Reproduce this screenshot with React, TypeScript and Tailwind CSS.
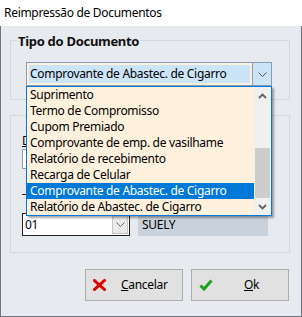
import React from 'react';

const items = [
  'Suprimento',
  'Termo de Compromisso',
  'Cupom Premiado',
  'Comprovante de emp. de vasilhame',
  'Relatório de recebimento',
  'Recarga de Celular',
  'Comprovante de Abastec. de Cigarro',
  'Relatório de Abastec. de Cigarro',
];
const selected = 6;

const Chevron = ({ className = '' }: { className?: string }) => (
  <svg width="9" height="5" viewBox="0 0 9 5" className={className}>
    <polyline points="0.5,0.5 4.5,4.5 8.5,0.5" fill="none" stroke="currentColor" strokeWidth="1" />
  </svg>
);

const ScrollArrow = ({ up }: { up?: boolean }) => (
  <svg width="9" height="6" viewBox="0 0 9 6">
    <polyline
      points={up ? '1,5 4.5,1.5 8,5' : '1,1 4.5,4.5 8,1'}
      fill="none"
      stroke="#606060"
      strokeWidth="1.8"
    />
  </svg>
);

export default function App() {
  return (
    <div
      className="relative flex h-[317px] w-[302px] flex-col bg-[#e7eaef] text-[12px] tracking-[-0.3px] text-black"
      style={{ fontFamily: '"Noto Sans", "DejaVu Sans", sans-serif' }}
    >
      {/* Title bar */}
      <div className="flex h-[26px] items-center bg-white pl-[4px] leading-none">
        Reimpressão de Documentos
      </div>

      <div className="flex flex-1 flex-col border-x border-b border-[#6f7480] px-[9px]">
        {/* Group 1 */}
        <div className="relative mt-[14px] h-[60px] w-[280px] border border-[#d4d7dc]">
          <span className="absolute left-[6px] top-[-7px] bg-[#e7eaef] px-[1px] text-[13px] font-bold leading-[14px] text-[#111]">
            Tipo do Documento
          </span>
          <div className="ml-[15px] mt-[21px] flex h-[24px] w-[246px] border border-[#8a9bb3] bg-[#fdf0dc]">
            <div className="m-[2px] flex flex-1 items-center bg-[#cce4f7] pl-[1px] leading-none">
              Comprovante de Abastec. de Cigarro
            </div>
            <div className="flex w-[19px] items-center justify-center border-l border-[#8a9bb3] bg-[#cce4f7] text-[#555]">
              <Chevron />
            </div>
          </div>
        </div>

        {/* Group 2 */}
        <div className="mt-[15px] flex h-[138px] w-[280px] flex-col items-start border border-[#d4d7dc] pl-[11px]">
          <span className="mt-[19px] text-[12px] leading-[12px] underline">D</span>
          <div className="mt-[2px] h-[20px] w-[110px] border border-[#9aa0a8] bg-white" />
          <span className="mt-[25px] h-[1px] w-[5px] bg-[#222]" />
          <div className="mt-[18px] flex gap-[8px]">
            <div className="flex h-[23px] w-[108px] border border-[#222] bg-white">
              <div className="flex flex-1 items-center pl-[2px] leading-none">01</div>
              <div className="m-[1px] flex w-[16px] items-center justify-center border border-[#c7c7c7] bg-[#eaeaea] text-[#666]">
                <Chevron />
              </div>
            </div>
            <div className="flex h-[23px] w-[130px] items-center bg-[#c8d1dc] pl-[4px] leading-none">SUELY</div>
          </div>
        </div>

        {/* Buttons */}
        <div className="mt-[16px] flex justify-end gap-[8px] pr-[3px]">
          <button className="flex h-[32px] w-[98px] items-center border border-[#adadad] bg-[#e1e1e1] pl-[7px]">
            <svg width="13" height="12" viewBox="0 0 13 12">
              <path d="M1.5 1.5 L11.5 10.5 M11.5 1.5 L1.5 10.5" stroke="#e00000" strokeWidth="3" strokeLinecap="square" />
            </svg>
            <span className="ml-[15px] leading-none">
              <span className="underline">C</span>ancelar
            </span>
          </button>
          <button className="flex h-[32px] w-[98px] items-center border border-[#adadad] bg-[#e1e1e1] pl-[7px]">
            <svg width="14" height="12" viewBox="0 0 14 12">
              <path d="M1.5 6.5 L5 10 L12.5 1.5" fill="none" stroke="#17a21a" strokeWidth="3" />
            </svg>
            <span className="ml-[31px] leading-none">
              <span className="underline">O</span>k
            </span>
          </button>
        </div>
      </div>

      {/* Dropdown list overlay */}
      <div className="absolute left-[26px] top-[86px] flex h-[130px] w-[246px] border border-[#0078d7] bg-[#fdf0dc] shadow-[2px_2px_2px_rgba(0,0,0,0.35)]">
        <div className="flex flex-1 flex-col">
          {items.map((it, i) => (
            <div
              key={it}
              className={`flex h-[16px] items-center pl-[3px] leading-none ${
                i === selected ? 'bg-[#0078d7] text-white' : ''
              }`}
            >
              {it}
            </div>
          ))}
        </div>
        <div className="flex w-[17px] flex-col items-center bg-[#f0f0f0]">
          <div className="flex h-[17px] items-center justify-center">
            <ScrollArrow up />
          </div>
          <div className="mt-[44px] h-[50px] w-[15px] bg-[#cdcdcd]" />
          <div className="mt-auto flex h-[17px] items-center justify-center">
            <ScrollArrow />
          </div>
        </div>
      </div>
    </div>
  );
}
